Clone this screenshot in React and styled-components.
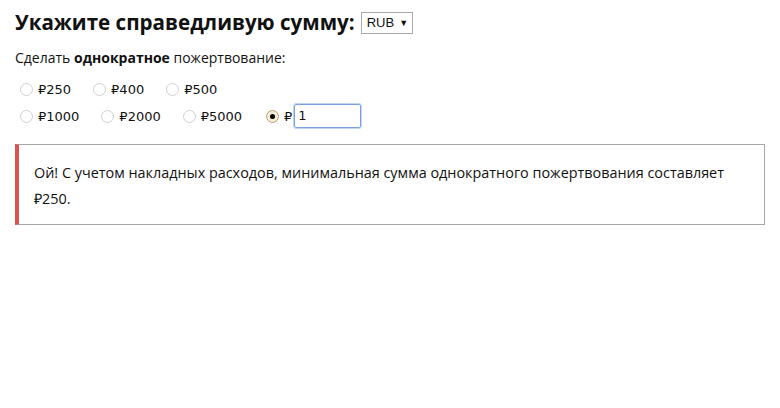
import React, { useState } from 'react';
import styled, { createGlobalStyle } from 'styled-components';

const Global = createGlobalStyle`
  body { margin: 0; background: #fff; color: #111; font-family: "Open Sans", sans-serif; }
`

const Page = styled.div`
  padding: 4px 15px 0 15px;
`
const Title = styled.h2`
  margin: 0; font-size: 20.6px; font-weight: 700; line-height: 36px;
  display: flex; align-items: center; gap: 6px;
`
const Select = styled.div`
  display: inline-flex; align-items: center; gap: 5px;
  height: 20px; padding: 0 4px 0 5px; margin-top: 2px;
  border: 1px solid #aaa; background: #fff;
  font-family: "Liberation Sans", Arial, sans-serif; font-size: 13px; font-weight: 400;
  & span { font-size: 9px; }
`
const Lead = styled.p`
  margin: 8px 0 11px; font-size: 14px; line-height: 20px;
`
const Options = styled.div`
  display: flex; flex-direction: column; gap: 7px; padding-left: 5px;
`
const Row = styled.div`
  display: flex; align-items: center; gap: 22px; height: 20px;
`
const Opt = styled.label`
  display: flex; align-items: center; gap: 5px; margin-left: ${p => p.$shift || 0}px;
  font-family: "DejaVu Sans", Verdana, sans-serif; font-size: 13px; color: #111;
`
const Radio = styled.span`
  width: 11px; height: 11px; border-radius: 50%;
  border: 1px solid ${p => (p.$on ? '#b8a37a' : '#d0d0d0')};
  background: ${p => (p.$on ? '#f4ecd8' : '#fff')};
  display: flex; align-items: center; justify-content: center;
  &::after {
    content: ''; width: 5px; height: 5px; border-radius: 50%;
    background: ${p => (p.$on ? '#000' : 'transparent')};
  }
`
const Amount = styled.input`
  box-sizing: border-box; width: 67px; height: 24px; padding: 1px 3px; margin: -1px 0 0 -3px;
  border: 1px solid #7ba0e0; border-radius: 2px; outline: 1px solid #c3d4f2;
  font-family: "DejaVu Sans", Verdana, sans-serif; font-size: 13px; color: #111;
`
const Alert = styled.div`
  margin-top: 18px; padding: 15px 15px 12px;
  border: 1px solid #a6a6a6; border-left: 4px solid #d9534f;
  font-size: 14.4px; line-height: 26px;
`

const rows = [
  ['₽250', '₽400', '₽500'],
  ['₽1000', '₽2000', '₽5000'],
]

export default function App() {
  const [val, setVal] = useState('1')
  return (
    <Page>
      <Global />
      <Title>Укажите справедливую сумму: <Select>RUB <span>▼</span></Select></Title>
      <Lead>Сделать <b>однократное</b> пожертвование:</Lead>
      <Options>
        {rows.map((items, i) => (
          <Row key={i}>
            {items.map(t => (
              <Opt key={t}><Radio />{t}</Opt>
            ))}
            {i === 1 && (
              <Opt $shift={2}><Radio $on />₽ <Amount value={val} onChange={e => setVal(e.target.value)} /></Opt>
            )}
          </Row>
        ))}
      </Options>
      <Alert>Ой! С учетом накладных расходов, минимальная сумма однократного пожертвования составляет ₽250.</Alert>
    </Page>
  )
}
